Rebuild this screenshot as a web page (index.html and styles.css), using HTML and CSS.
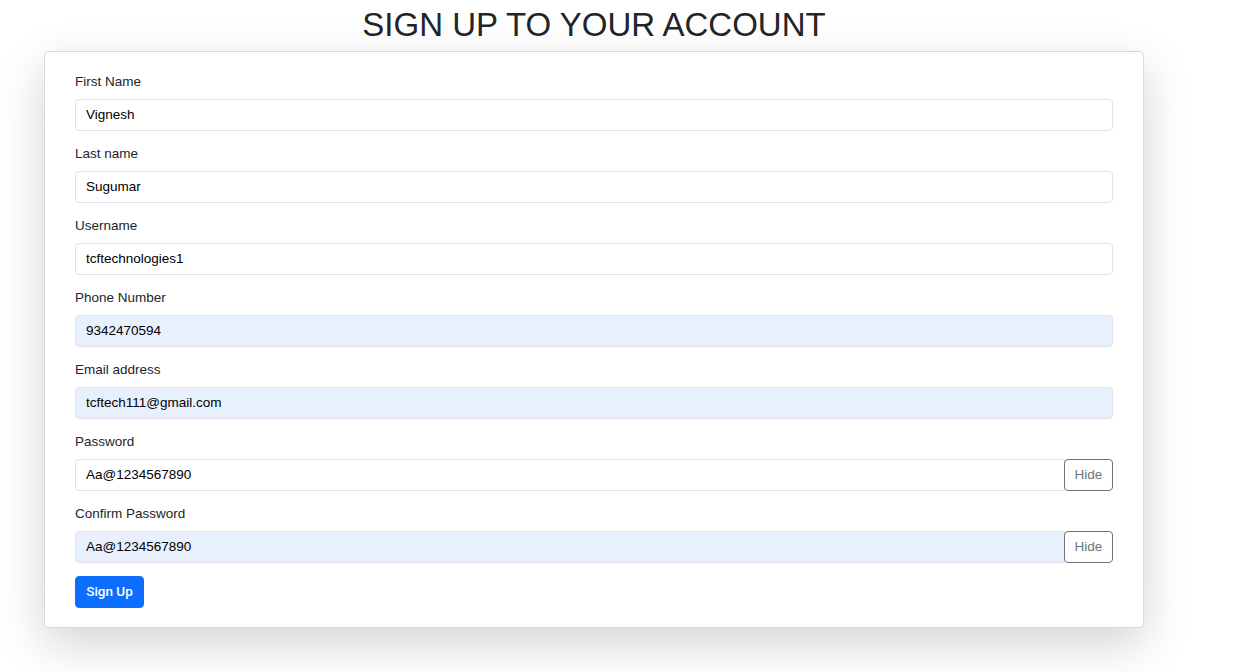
FILE: index.html
```html
<!DOCTYPE html>
<html>
<head>
<meta charset="utf-8">
<link rel="stylesheet" href="styles.css">
</head>
<body>
<div class="wrap">
  <h1 class="title">SIGN UP TO YOUR ACCOUNT</h1>
  <form class="card">
    <div class="group">
      <label class="label">First Name</label>
      <input class="input" type="text" value="Vignesh">
    </div>
    <div class="group">
      <label class="label">Last name</label>
      <input class="input" type="text" value="Sugumar">
    </div>
    <div class="group">
      <label class="label">Username</label>
      <input class="input" type="text" value="tcftechnologies1">
    </div>
    <div class="group">
      <label class="label">Phone Number</label>
      <input class="input filled" type="text" value="9342470594">
    </div>
    <div class="group">
      <label class="label">Email address</label>
      <input class="input filled" type="text" value="tcftech111@gmail.com">
    </div>
    <div class="group">
      <label class="label">Password</label>
      <div class="input-row">
        <input class="input joined" type="text" value="Aa@1234567890">
        <button type="button" class="hide-btn">Hide</button>
      </div>
    </div>
    <div class="group">
      <label class="label">Confirm Password</label>
      <div class="input-row">
        <input class="input joined filled" type="text" value="Aa@1234567890">
        <button type="button" class="hide-btn">Hide</button>
      </div>
    </div>
    <button type="button" class="submit">Sign Up</button>
  </form>
</div>
</body>
</html>
```

FILE: styles.css
```css
html, body {
  margin: 0;
  padding: 0;
  background: #ffffff;
}
body {
  font-family: "Liberation Sans", Arial, sans-serif;
  color: #212529;
  padding-bottom: 60px;
}
.wrap {
  width: 1100px;
  margin-left: 44px;
}
.title {
  margin: 0;
  height: 51px;
  font-weight: 400;
  font-size: 33px;
  line-height: 49px;
  text-align: center;
  color: #212529;
}
.card {
  display: block;
  background: #fff;
  border: 1px solid #d6d8db;
  border-radius: 5px;
  padding: 20px 30px 19px;
  box-shadow: 0 16px 48px rgba(0, 0, 0, 0.175);
}
.group {
  display: flex;
  flex-direction: column;
  margin-bottom: 13px;
}
.label {
  font-size: 13.5px;
  line-height: 18px;
  padding-top: 1px;
  margin-bottom: 8px;
  color: #212529;
}
.input {
  box-sizing: border-box;
  height: 32px;
  width: 100%;
  border: 1px solid #dee2e6;
  border-radius: 4px;
  padding: 0 10px 2px;
  font-family: "Liberation Sans", Arial, sans-serif;
  font-size: 13.5px;
  color: #000;
  background: #fff;
  outline: none;
}
.input.filled {
  background: #e8f0fe;
}
.input-row {
  display: flex;
}
.input.joined {
  flex: 1;
  border-top-right-radius: 0;
  border-bottom-right-radius: 0;
}
.hide-btn {
  box-sizing: border-box;
  height: 32px;
  width: 49px;
  border: 1px solid #6c757d;
  border-radius: 4px;
  background: #fff;
  color: #6c757d;
  font-family: "Liberation Sans", Arial, sans-serif;
  font-size: 13.5px;
  padding: 0 0 2px;
  margin-left: -1px;
}
.submit {
  box-sizing: border-box;
  height: 32px;
  width: 69px;
  border: 1px solid #0d6efd;
  border-radius: 4px;
  background: #0d6efd;
  color: #fff;
  font-family: Roboto, "Liberation Sans", Arial, sans-serif;
  font-size: 13.5px;
  font-weight: 500;
  padding: 0 0 2px;
}
```
